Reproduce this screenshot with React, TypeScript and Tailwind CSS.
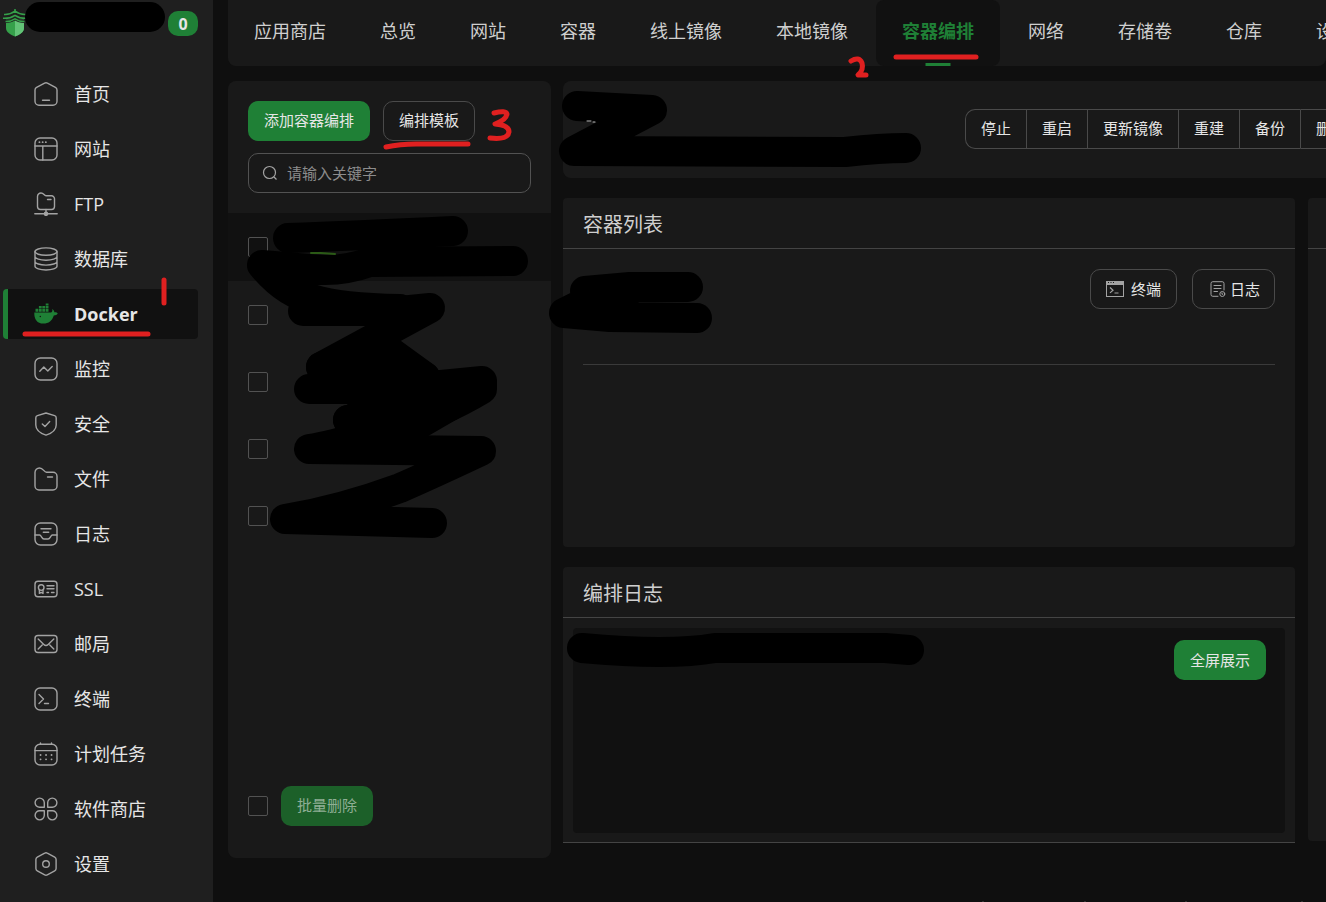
import React from 'react';

type IconProps = { children: React.ReactNode };

const LineIcon: React.FC<IconProps> = ({ children }) => (
  <svg
    viewBox="0 0 24 24"
    className="h-6 w-6 shrink-0"
    fill="none"
    stroke="#a3a3a3"
    strokeWidth="1.4"
    strokeLinecap="round"
    strokeLinejoin="round"
    aria-hidden="true"
  >
    {children}
  </svg>
);

const icons: Record<string, React.ReactNode> = {
  home: (
    <LineIcon>
      <path d="M10.6 1.1a3 3 0 0 1 2.8 0l8 4.3a3 3 0 0 1 1.6 2.6v11.2a4 4 0 0 1-4 4H5a4 4 0 0 1-4-4V8a3 3 0 0 1 1.6-2.6z" />
      <path d="M8.5 18.2h7" />
    </LineIcon>
  ),
  site: (
    <LineIcon>
      <rect x="1" y="1" width="22" height="22" rx="5" />
      <path d="M1 9h22M8.8 9v14" />
      <path d="M5.4 5.2h.1M8.6 5.2h.1M11.8 5.2h.1" strokeWidth="1.8" />
    </LineIcon>
  ),
  ftp: (
    <LineIcon>
      <path d="M3.5 4.5A3.5 3.5 0 0 1 7 1c2.8 0 3 2.6 5 2.8h5.5a3 3 0 0 1 3 3v7.700a3 3 0 0 1-3 3h-11a3 3 0 0 1-3-3z" />
      <path d="M13.5 7.5H17M12 17.5v3M.8 21.8h22.4" />
      <circle cx="12" cy="21.8" r="1.6" fill="#a3a3a3" />
    </LineIcon>
  ),
  database: (
    <LineIcon>
      <ellipse cx="12" cy="4.6" rx="11" ry="3.7" />
      <path d="M1 4.6v14.7C1 21.3 6 23 12 23s11-1.7 11-3.7V4.6M1 9.500c0 2 5 3.700 11 3.700s11-1.700 11-3.700M1 14.400c0 2 5 3.700 11 3.700s11-1.700 11-3.700" />
    </LineIcon>
  ),
  docker: (
    <svg viewBox="0 0 24 24" className="h-6 w-6 shrink-0" fill="#1f8036" aria-hidden="true">
      <path d="M.3 10.5h16.5c1.3 0 1.8-1.400 1.500-3.500 1.300 1 2 2.200 2.100 3.200 1.400-.2 2.800.3 3.400 1-.7 1.500-2.200 2.200-4 2.200-1.600 5-5 8.200-10.500 8.200C3.200 21.600 0 17.300.3 10.500z" />
      <path d="M1.500 6.800h2.800v2.900H1.500zM4.900 6.800h2.800v2.900H4.900zM8.300 6.800h2.800v2.900H8.300zM11.700 6.800h2.800v2.900h-2.800zM4.900 4h2.800v2.300H4.900zM8.300 4h2.800v2.300H8.300zM11.700 4h2.800v2.300h-2.800zM11.700 1.600h2.800v1.900h-2.800z" />
      <circle cx="6.3" cy="14.5" r=".7" fill="#111111" />
    </svg>
  ),
  monitor: (
    <LineIcon>
      <rect x="1" y="1" width="22" height="22" rx="5.5" />
      <path d="M5.8 14.2l4-4.200 4 4 4.400-4.400" />
    </LineIcon>
  ),
  security: (
    <LineIcon>
      <path d="M12 1l8.600 2.600a2.400 2.400 0 0 1 1.600 2.300V13c0 5-4.500 8.300-10.200 10.200C6.300 21.300 1.800 18 1.800 13V5.900a2.400 2.400 0 0 1 1.600-2.300z" />
      <path d="M8.3 12l2.700 2.600 4.700-5" />
    </LineIcon>
  ),
  files: (
    <LineIcon>
      <path d="M1 5.500A4.500 4.500 0 0 1 5.500 1c3.800 0 4.300 4 7 4.300H19a4 4 0 0 1 4 4V19a4 4 0 0 1-4 4H5a4 4 0 0 1-4-4z" />
      <path d="M13.500 10h5" />
    </LineIcon>
  ),
  logs: (
    <LineIcon>
      <rect x="1" y="1" width="22" height="22" rx="5.5" />
      <path d="M1 13h4.500c2 0 2 4 4.500 4h4c2.500 0 2.500-4 4.500-4H23M7 6.800h10M9.300 10.300h5.400" />
    </LineIcon>
  ),
  ssl: (
    <LineIcon>
      <rect x="1" y="4.3" width="22" height="15.4" rx="3" />
      <circle cx="7.2" cy="10.6" r="2.8" />
      <path d="M5.400 13.500v2.900l1.800-1 1.800 1v-2.900M13 8.800h7M13 11.800h7M13 15.500h1.500M17.500 15.500H20" />
    </LineIcon>
  ),
  mail: (
    <LineIcon>
      <rect x="1" y="3.5" width="22" height="17" rx="3" />
      <path d="M4.200 7l5.600 5.500a3.200 3.200 0 0 0 4.400 0L19.800 7M4.200 17l4-4M19.800 17l-4-4" />
    </LineIcon>
  ),
  terminal: (
    <LineIcon>
      <rect x="1" y="1" width="22" height="22" rx="5" />
      <path d="M5 7.500l4.500 4.500L5 16.500M10.500 16.500h4" />
    </LineIcon>
  ),
  cron: (
    <LineIcon>
      <rect x="1" y="2.3" width="22" height="20.7" rx="5" />
      <path d="M1 8.600h22M6.500 1v1M17.500 1v1" />
      <path d="M6.500 13h.1M12 13h.1M17.500 13h.1M6.500 17.300h.1M12 17.300h.1M17.500 17.300h.1" strokeWidth="1.8" />
    </LineIcon>
  ),
  store: (
    <LineIcon>
      <path d="M10.300 10.300H5.800a4.600 4.600 0 1 1 4.500-4.600zM13.700 10.300h4.500a4.600 4.600 0 1 0-4.500-4.600zM10.300 13.700H5.800a4.600 4.600 0 1 0 4.500 4.600zM13.700 13.700h4.500a4.600 4.600 0 1 1-4.500 4.600z" />
    </LineIcon>
  ),
  settings: (
    <LineIcon>
      <path d="M10.700 1.100a2.600 2.600 0 0 1 2.600 0l7.400 4a2.600 2.600 0 0 1 1.400 2.300v9.200a2.600 2.600 0 0 1-1.400 2.300l-7.400 4a2.600 2.600 0 0 1-2.600 0l-7.400-4a2.600 2.600 0 0 1-1.400-2.300V7.400a2.600 2.600 0 0 1 1.400-2.300z" />
      <circle cx="12" cy="12" r="3.3" />
    </LineIcon>
  )
};

const menu = [
  { key: 'home', label: '首页' },
  { key: 'site', label: '网站' },
  { key: 'ftp', label: 'FTP' },
  { key: 'database', label: '数据库' },
  { key: 'docker', label: 'Docker' },
  { key: 'monitor', label: '监控' },
  { key: 'security', label: '安全' },
  { key: 'files', label: '文件' },
  { key: 'logs', label: '日志' },
  { key: 'ssl', label: 'SSL' },
  { key: 'mail', label: '邮局' },
  { key: 'terminal', label: '终端' },
  { key: 'cron', label: '计划任务' },
  { key: 'store', label: '软件商店' },
  { key: 'settings', label: '设置' }
];

const tabs = ['应用商店', '总览', '网站', '容器', '线上镜像', '本地镜像', '容器编排', '网络', '存储卷', '仓库', '设置'];

const actions = ['停止', '重启', '更新镜像', '重建', '备份', '删除'];

const checkboxClass = 'block h-5 w-5 shrink-0 appearance-none rounded-xs border border-[#525252] checked:bg-[#1f8036]';

const Logo = () => (
  <svg viewBox="0 0 24 28" className="h-7 w-6" aria-hidden="true">
    <path d="M3 10l9-2 9 2v9c0 4-4 6.500-9 8.500-5-2-9-4.500-9-8.500z" fill="#35a04a" />
    <path d="M12 8l9 2v9c0 4-4 6.500-9 8.500z" fill="#63c377" />
    <path
      d="M1 5.500c5 .3 8-1 11-3.300 3 2.300 6 3.600 11 3.300M0 9.300c5 .3 9-1 12-3 3 2 7 3.300 12 3M2.500 12.500c4 0 7-1 9.500-2.700 2.500 1.700 5.500 2.700 9.500 2.700"
      fill="none"
      stroke="#1f1f1f"
      strokeWidth="3"
    />
    <path
      d="M1 5.500c5 .3 8-1 11-3.300 3 2.300 6 3.600 11 3.300M0 9.300c5 .3 9-1 12-3 3 2 7 3.300 12 3M2.500 12.500c4 0 7-1 9.500-2.700 2.500 1.700 5.500 2.700 9.500 2.700"
      fill="none"
      stroke="#35a04a"
      strokeWidth="1.5"
    />
    <path d="M12 0v3" stroke="#35a04a" strokeWidth="1.5" />
  </svg>
);

const Sidebar = () => (
  <aside className="w-[213px] shrink-0 bg-[#1f1f1f]">
    <div className="flex h-[69px] items-start justify-between pl-[3px] pr-[15px] pt-[9px]">
      <Logo />
      <span className="mt-[2px] flex h-[25px] w-[30px] items-center justify-center rounded-[10px] bg-[#1f8036] text-base font-bold">
        0
      </span>
    </div>
    <nav className="flex flex-col gap-[5px] pl-[3px] pr-[15px]">
      {menu.map(({ key, label }) => {
        const active = key === 'docker';
        return (
          <a
            key={key}
            href="#"
            className={`flex h-[50px] items-center gap-4 rounded-[4px] border-l-[5px] pl-[26px] text-[18px] ${
              active ? 'border-[#1f8036] bg-[#111111] font-bold' : 'border-transparent'
            }`}
          >
            {icons[key]}
            <span>{label}</span>
          </a>
        );
      })}
    </nav>
  </aside>
);

const Tabs = () => (
  <nav className="flex h-[66px] gap-[2px] overflow-hidden rounded-b-lg bg-[#191919]">
    {tabs.map((tab) => {
      const active = tab === '容器编排';
      return (
        <a
          key={tab}
          href="#"
          className={`relative flex shrink-0 items-center px-[26px] pb-[3px] text-[18px] ${
            active ? 'rounded-lg bg-[#111111] font-bold text-[#1f8036]' : 'text-[#cfcfcf]'
          }`}
        >
          {tab}
          {active && <span className="absolute bottom-0 left-1/2 h-[3px] w-[25px] -translate-x-1/2 bg-[#1f8036]" />}
        </a>
      );
    })}
  </nav>
);

const ComposeList = () => (
  <section className="flex h-[777px] w-[323px] shrink-0 flex-col rounded-lg bg-[#191919]">
    <div className="px-5 pb-5 pt-5">
      <div className="flex gap-[13px]">
        <button type="button" className="h-10 rounded-[10px] bg-[#1f8036] px-4 pb-[2px] text-[15px]">
          添加容器编排
        </button>
        <button type="button" className="h-10 rounded-[10px] border border-[#4a4a4a] px-[15px] pb-[2px] text-[15px]">
          编排模板
        </button>
      </div>
      <label className="mt-3 flex h-10 items-center gap-[9px] rounded-[10px] border border-[#525252] px-[13px]">
        <svg viewBox="0 0 16 16" className="h-4 w-4 shrink-0" fill="none" stroke="#a3a3a3" strokeWidth="1.2" aria-hidden="true">
          <circle cx="7.5" cy="7.5" r="6" />
          <path d="M12 12l2.500 2.500" />
        </svg>
        <input
          type="text"
          aria-label="请输入关键字"
          placeholder="请输入关键字"
          className="min-w-0 flex-1 bg-transparent text-[15px] outline-none placeholder:text-[#8c8c8c]"
        />
      </label>
    </div>
    <ul className="flex-1">
      {[1, 2, 3, 4, 5].map((row) => (
        <li key={row} className={`flex items-center px-5 ${row === 1 ? 'h-[68px] bg-[#111111]' : 'h-[67px]'}`}>
          <input type="checkbox" aria-label={`编排 ${row}`} className={checkboxClass} />
        </li>
      ))}
    </ul>
    <div className="flex items-center gap-[13px] px-5 pb-8">
      <input type="checkbox" aria-label="全选" className={checkboxClass} />
      <button type="button" disabled className="h-10 rounded-[10px] bg-[#1c6029] px-4 pb-[2px] text-[15px] text-[#8fae95]">
        批量删除
      </button>
    </div>
  </section>
);

const CardTitle: React.FC<{ children?: React.ReactNode }> = ({ children }) => (
  <h2 className="flex h-[51px] items-center border-b border-[#444444] px-5 pt-[3px] text-xl text-[#cfcfcf]">{children}</h2>
);

const Detail = () => (
  // Wider than the window: the side card continues past the right edge
  <div className="-mr-[302px] min-w-0 flex-1">
    <header className="flex h-[97px] items-center rounded-lg bg-[#191919] pb-[2px] pl-[402px]">
      <div className="flex">
        {actions.map((action, i) => (
          <button
            key={action}
            type="button"
            className={`h-10 border-y border-l border-[#4a4a4a] px-[15px] text-[15px] ${
              i === 0 ? 'rounded-l-[10px]' : ''
            } ${i === actions.length - 1 ? 'rounded-r-[10px] border-r' : ''}`}
          >
            {action}
          </button>
        ))}
      </div>
    </header>

    <div className="mt-5 flex gap-[13px]">
      <div className="flex min-w-0 flex-1 flex-col gap-5">
        <section className="h-[349px] rounded-[4px] bg-[#191919]">
          <CardTitle>容器列表</CardTitle>
          <div className="mx-5 flex h-[116px] items-start justify-end gap-[15px] border-b border-[#3a3a3a] pt-5">
            <button
              type="button"
              className="flex h-10 items-center gap-[7px] rounded-[10px] border border-[#4a4a4a] px-[15px] text-[15px]"
            >
              <svg viewBox="0 0 18 16" className="h-4 w-[18px]" fill="none" stroke="#a3a3a3" aria-hidden="true">
                <rect x=".5" y=".5" width="17" height="15" />
                <path d="M.5 2.500h17" strokeWidth="3" />
                <path d="M2 1.500h1M4.500 1.500h1M7 1.500h1" stroke="#191919" />
                <path d="M4 6.500l3 2.700-3 2.700M8.500 12h4" strokeWidth="1.2" />
              </svg>
              终端
            </button>
            <button
              type="button"
              className="flex h-10 items-center gap-1 rounded-[10px] border border-[#4a4a4a] pl-[17px] pr-[14px] text-[15px]"
            >
              <svg viewBox="0 0 16 16" className="h-4 w-4" fill="none" stroke="#a3a3a3" strokeLinecap="round" aria-hidden="true">
                <path d="M14 9V2.500A1.800 1.800 0 0 0 12.200.7H2.800A1.800 1.800 0 0 0 1 2.500v11a1.800 1.800 0 0 0 1.800 1.800H8M4 4.500h7M4 7.500h7M4 10.500h3.500" />
                <circle cx="12.3" cy="13" r="2.5" />
                <path d="M12 12v1.200h.8" />
              </svg>
              日志
            </button>
          </div>
        </section>

        <section className="rounded-t-[4px] border-b border-[#444444] bg-[#191919]">
          <CardTitle>编排日志</CardTitle>
          <div className="mx-[10px] mb-[9px] mt-[10px] flex h-[205px] items-start justify-end rounded-[4px] bg-[#111111] pr-[19px] pt-3">
            <button type="button" className="h-10 rounded-[10px] bg-[#1f8036] px-4 text-[15px]">
              全屏展示
            </button>
          </div>
        </section>
      </div>

      <section className="h-[643px] w-80 shrink-0 rounded-[4px] bg-[#191919]">
        <CardTitle />
      </section>
    </div>
  </div>
);

// Freehand marks laid over the panel: black covers and red step numbers
const Markup = () => (
  <svg
    viewBox="0 0 1326 902"
    className="pointer-events-none absolute left-0 top-0 h-[902px] w-[1326px]"
    fill="none"
    strokeLinecap="round"
    strokeLinejoin="round"
    aria-hidden="true"
  >
    <g stroke="#000000" strokeWidth="30">
      <path d="M40 17H150" />
      <path d="M288 238Q350 236 453 231" />
      <path d="M513 261L370 262Q345 271 320 270L262 265Q285 293 312 299Q340 308 400 309" />
      <path d="M303 311L400 311L430 308L321 367" />
      <path d="M309 389H400L482 381L482 389Q440 414 410 420H348" />
      <path d="M385 348L425 377L400 400" fill="#000000" />
      <path d="M321 367L380 350L425 377L380 410Z" fill="#000000" />
      <path d="M365 435Q330 446 309 449L481 451Q430 475 400 488Q340 510 285 519L432 523" />
      <path d="M348 420L400 435L450 406" fill="#000000" />
      <path d="M577 106L652 110L574 151L845 152Q880 148 906 148" />
      <path d="M688 287H630L585 291M564 313L590 300L630 290M564 313L610 317L697 318" />
      <path d="M582 648Q670 656 715 648H885L909 650" />
    </g>
    <path d="M311 253l10 0l14 1" stroke="#2b5a16" strokeWidth="2" />
    <path d="M587 121h4M593 122h2" stroke="#bdbdbd" strokeWidth="1" />
    <path d="M983 901v1M1085 901v1M1186 901v1M1302 901v1" stroke="#525252" strokeLinecap="butt" />
    <g stroke="#e02020" strokeWidth="5">
      <path d="M25 334H148" />
      <path d="M164 280V303" />
      <path d="M896 57H976" />
      <path d="M851 61Q859 56 862 63Q864 70 858 75H866" />
      <path d="M386 147Q400 144 416 144H468" />
      <path d="M494 113Q506 110 507 114Q506 120 495 124Q509 125 509 132Q508 140 490 138" />
    </g>
  </svg>
);

export default function App() {
  return (
    <div className="relative flex min-h-screen overflow-hidden bg-[#0f0f0f] font-['Open_Sans','Noto_Sans_CJK_SC',sans-serif] text-[#e6e6e6]">
      <Sidebar />
      <main className="ml-[15px] min-w-0 flex-1">
        <Tabs />
        <div className="mt-[15px] flex gap-3">
          <ComposeList />
          <Detail />
        </div>
      </main>
      <Markup />
    </div>
  );
}
